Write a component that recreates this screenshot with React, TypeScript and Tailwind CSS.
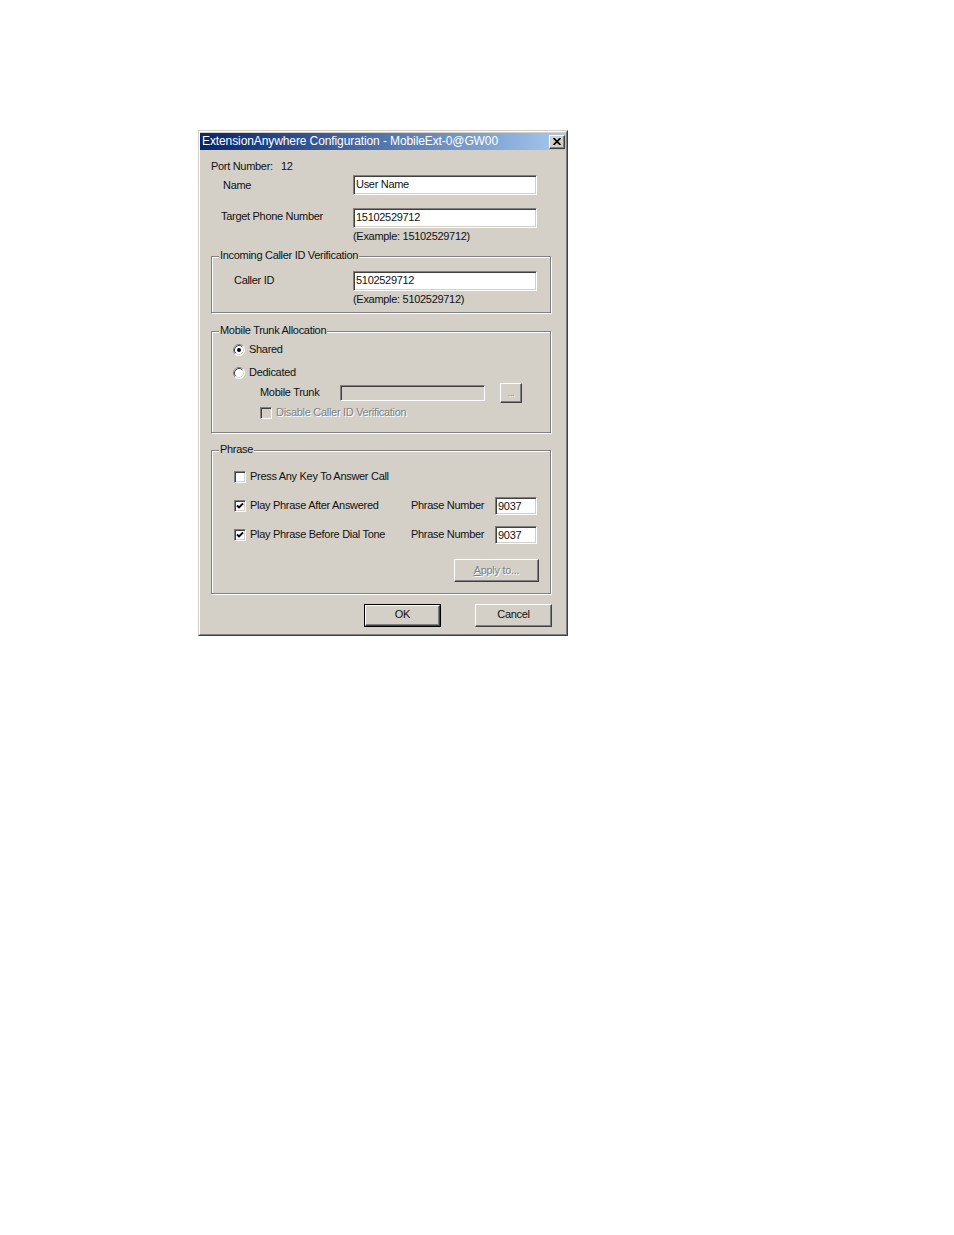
import React from "react";

const sunken =
  "border border-[#808080] border-r-white border-b-white shadow-[inset_1px_1px_0_#404040,inset_-1px_-1px_0_#d4d0c8]";
const raised =
  "border border-white border-r-[#404040] border-b-[#404040] shadow-[inset_-1px_-1px_0_#808080,inset_1px_1px_0_#d4d0c8]";
const etched =
  "relative border border-[#808080] shadow-[inset_1px_1px_0_#fff,1px_1px_0_#fff]";
const disabledText = "text-[#808080] [text-shadow:1px_1px_0_#fff]";

const TextBox = ({ value, className = "" }: { value?: string; className?: string }) => (
  <div className={`${sunken} bg-white flex items-start pt-[3px] pl-[2px] ${className}`}>
    <span className="leading-[11px]">{value}</span>
  </div>
);

const Radio = ({ checked }: { checked?: boolean }) => (
  <svg width="12" height="12" viewBox="0 0 12 12" className="shrink-0">
    <circle cx="6" cy="6" r="5.5" fill="#fff" />
    <path d="M2.11 9.89 A5.5 5.5 0 0 1 9.89 2.11" stroke="#808080" fill="none" />
    <path d="M2.82 9.18 A4.5 4.5 0 0 1 9.18 2.82" stroke="#404040" fill="none" />
    <path d="M2.11 9.89 A5.5 5.5 0 0 0 9.89 2.11" stroke="#fff" fill="none" />
    <path d="M2.82 9.18 A4.5 4.5 0 0 0 9.18 2.82" stroke="#d4d0c8" fill="none" />
    {checked && <circle cx="6" cy="6" r="2" fill="#000" />}
  </svg>
);

const Check = ({ checked, disabled }: { checked?: boolean; disabled?: boolean }) => (
  <div
    className={`${sunken} w-[12px] h-[12px] shrink-0 flex items-center justify-center ${
      disabled ? "bg-[#d4d0c8]" : "bg-white"
    }`}
  >
    {checked && (
      <svg width="8" height="8" viewBox="0 0 8 8">
        <path d="M1 3.5 L3 5.5 L7 1.5" stroke="#000" strokeWidth="1.8" fill="none" />
      </svg>
    )}
  </div>
);

const Legend = ({ children }: { children: React.ReactNode }) => (
  <span className="absolute -top-[9px] left-[7px] px-[1px] bg-[#d4d0c8] leading-[14px]">
    {children}
  </span>
);

export default function App() {
  return (
    <div className="min-h-[1235px] w-full bg-white pt-[130px] pl-[198px] font-['Liberation_Sans',Arial,sans-serif] text-[11px] tracking-[-0.3px] text-[#111]">
      {/* dialog frame */}
      <div className="w-[370px] h-[506px] bg-[#d4d0c8] border border-[#d4d0c8] border-r-[#404040] border-b-[#404040]">
        <div className="h-full border border-white border-r-[#808080] border-b-[#808080] flex flex-col">
          {/* title bar */}
          <div className="h-[17px] mt-[1px] flex items-center justify-between bg-gradient-to-r from-[#0a246a] to-[#a6caf0] pl-[2px] pr-[1px]">
            <span className="text-white text-[12px] tracking-[-0.1px] leading-none -mt-[1px]">
              ExtensionAnywhere Configuration - MobileExt-0@GW00
            </span>
            <div className={`${raised} bg-[#d4d0c8] w-[16px] h-[14px] flex items-center justify-center`}>
              <svg width="8" height="7" viewBox="0 0 8 7">
                <path d="M0.5 0 L7.5 7 M7.5 0 L0.5 7" stroke="#000" strokeWidth="1.7" />
              </svg>
            </div>
          </div>

          {/* body */}
          <div className="pl-[11px] flex flex-col">
            <div className="mt-[9px] h-[14px] flex items-center">
              <span className="w-[70px]">Port Number:</span>
              <span>12</span>
            </div>

            <div className="mt-[2px] h-[20px] flex items-center">
              <span className="w-[142px] pl-[12px]">Name</span>
              <TextBox value="User Name" className="w-[184px] h-[20px]" />
            </div>

            <div className="mt-[13px] h-[20px] flex items-start">
              <span className="w-[142px] pl-[10px] leading-[14px] pt-[1px]">Target Phone Number</span>
              <TextBox value="15102529712" className="w-[184px] h-[20px]" />
            </div>

            <div className="mt-[1px] h-[14px] flex items-center pl-[142px]">(Example: 15102529712)</div>

            {/* Incoming Caller ID */}
            <div className={`${etched} mt-[13px] w-[340px] h-[57px] pt-[14px]`}>
              <Legend>Incoming Caller ID Verification</Legend>
              <div className="h-[20px] flex items-center">
                <span className="w-[141px] pl-[22px] -mt-[1px]">Caller ID</span>
                <TextBox value="5102529712" className="w-[184px] h-[20px]" />
              </div>
              <div className="mt-[1px] h-[14px] flex items-center pl-[141px]">(Example: 5102529712)</div>
            </div>

            {/* Mobile Trunk Allocation */}
            <div className={`${etched} mt-[18px] w-[340px] h-[102px] pt-[11px]`}>
              <Legend>Mobile Trunk Allocation</Legend>
              <div className="h-[14px] flex items-center pl-[21px] gap-[4px]">
                <Radio checked />
                <span className="-mt-[1px]">Shared</span>
              </div>
              <div className="mt-[9px] h-[14px] flex items-center pl-[21px] gap-[4px]">
                <Radio />
                <span className="-mt-[1px]">Dedicated</span>
              </div>
              <div className="mt-[3px] h-[20px] flex items-center pl-[48px]">
                <span className="w-[80px] -mt-[1px]">Mobile Trunk</span>
                <div className={`${sunken} bg-[#d4d0c8] w-[145px] h-[16px]`} />
                <div
                  className={`${raised} bg-[#d4d0c8] ml-[15px] w-[22px] h-[20px] flex items-center justify-center ${disabledText} leading-none text-[9px]`}
                >
                  ...
                </div>
              </div>
              <div className="mt-[3px] h-[14px] flex items-center pl-[48px] gap-[4px]">
                <Check disabled />
                <span className={`${disabledText} -mt-[1px]`}>Disable Caller ID Verification</span>
              </div>
            </div>

            {/* Phrase */}
            <div className={`${etched} mt-[17px] w-[340px] h-[144px] pt-[19px]`}>
              <Legend>Phrase</Legend>
              <div className="h-[14px] flex items-center pl-[22px] gap-[4px]">
                <Check />
                <span className="-mt-[1px]">Press Any Key To Answer Call</span>
              </div>
              <div className="mt-[13px] h-[18px] flex items-center pl-[22px]">
                <Check checked />
                <span className="ml-[4px] w-[161px] -mt-[1px]">Play Phrase After Answered</span>
                <span className="w-[84px] -mt-[1px]">Phrase Number</span>
                <TextBox value="9037" className="w-[42px] h-[18px]" />
              </div>
              <div className="mt-[11px] h-[18px] flex items-center pl-[22px]">
                <Check checked />
                <span className="ml-[4px] w-[161px] -mt-[1px]">Play Phrase Before Dial Tone</span>
                <span className="w-[84px] -mt-[1px]">Phrase Number</span>
                <TextBox value="9037" className="w-[42px] h-[18px]" />
              </div>
              <div className="mt-[15px] pl-[242px]">
                <div
                  className={`${raised} bg-[#d4d0c8] w-[85px] h-[23px] flex items-center justify-center ${disabledText}`}
                >
                  <span className="-mt-[1px]">
                    <span className="underline">A</span>pply to...
                  </span>
                </div>
              </div>
            </div>

            {/* buttons */}
            <div className="mt-[10px] flex pl-[153px] gap-[34px]">
              <div className="border border-black">
                <div className={`${raised} bg-[#d4d0c8] w-[75px] h-[21px] flex items-center justify-center`}>
                  <span className="-mt-[2px]">OK</span>
                </div>
              </div>
              <div className={`${raised} bg-[#d4d0c8] w-[77px] h-[23px] flex items-center justify-center`}>
                <span className="-mt-[2px]">Cancel</span>
              </div>
            </div>
          </div>
        </div>
      </div>
    </div>
  );
}
